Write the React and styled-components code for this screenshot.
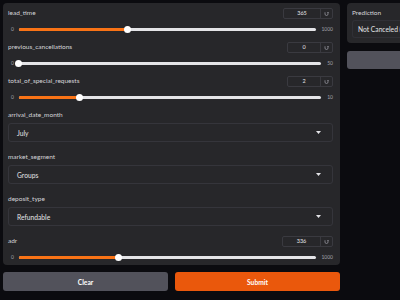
import React from "react";
import styled, { createGlobalStyle } from "styled-components";

const Global = createGlobalStyle`
  html, body { margin: 0; padding: 0; background: #0b0b0f; overflow: hidden; }
  body { font-family: Lato, "Open Sans", sans-serif; color: #e4e4e7; }
  * { box-sizing: border-box; }
`;

const Page = styled.div`
  display: flex;
  gap: 7px;
  padding: 3px 0 0 3px;
  width: 520px;
  height: 300px;
`;

const LeftCol = styled.div`
  width: 337px;
  display: flex;
  flex-direction: column;
  gap: 7px;
`;

const RightCol = styled.div`
  width: 120px;
  display: flex;
  flex-direction: column;
  gap: 8px;
`;

const Panel = styled.div`
  background: #27272a;
  border-radius: 4px;
  padding: 4px 7px 3px 5px;
  display: flex;
  flex-direction: column;
`;

const SliderBlock = styled.div`
  height: ${(p) => (p.last ? 27 : 34)}px;
  display: flex;
  flex-direction: column;
`;

const Header = styled.div`
  height: 12px;
  display: flex;
  align-items: center;
  justify-content: space-between;
`;

const Label = styled.span`
  font-size: 6.5px;
  color: #d4d4d8;
  line-height: 12px;
  white-space: nowrap;
`;

const NumberBox = styled.div`
  width: ${(p) => p.$w}px;
  height: 11px;
  border: 1px solid #3a3a40;
  border-radius: 2px;
  display: flex;
  align-items: stretch;
  background: #27272a;
`;

const NumberValue = styled.span`
  flex: 1;
  font-size: 5.5px;
  color: #e4e4e7;
  display: flex;
  align-items: center;
  justify-content: center;
  border-right: 1px solid #3a3a40;
`;

const ResetCell = styled.span`
  width: 11px;
  display: flex;
  align-items: center;
  justify-content: center;
  color: #a1a1aa;
`;

const TrackRow = styled.div`
  margin-top: 5px;
  height: 10px;
  display: flex;
  align-items: center;
  gap: 5px;
  padding-left: 3px;
`;

const MinMax = styled.span`
  font-size: 5px;
  color: #a1a1aa;
  line-height: 10px;
  min-width: ${(p) => p.$min || 0}px;
  text-align: ${(p) => p.$align || "left"};
`;

const Track = styled.div`
  position: relative;
  flex: 1;
  height: 3px;
  border-radius: 2px;
  background: #e4e4e7;
`;

const Fill = styled.div`
  height: 100%;
  border-radius: 2px;
  background: #f97316;
`;

const Thumb = styled.div`
  position: absolute;
  top: 50%;
  width: 7px;
  height: 7px;
  margin: -3.5px 0 0 -3.5px;
  border-radius: 50%;
  background: #ffffff;
`;

const DropBlock = styled.div`
  height: 42px;
  display: flex;
  flex-direction: column;
`;

const Select = styled.div`
  margin-top: 2px;
  height: 19px;
  border: 1px solid #35353b;
  border-radius: 3px;
  display: flex;
  align-items: center;
  justify-content: space-between;
  padding: 0 11px 0 8px;
  font-size: 6.7px;
  color: #e4e4e7;
`;

const ButtonRow = styled.div`
  display: flex;
  gap: 7px;
`;

const Button = styled.button`
  flex: 1;
  height: 19px;
  border: none;
  border-radius: 3px;
  background: ${(p) => (p.$primary ? "#ea580c" : "#52525b")};
  color: #ffffff;
  font-family: Lato, "Open Sans", sans-serif;
  font-weight: 700;
  font-size: 6.7px;
  padding: 0;
`;

const PredPanel = styled.div`
  background: #27272a;
  border-radius: 4px;
  padding: 4px 0 5px 5px;
  display: flex;
  flex-direction: column;
  gap: 1px;
`;

const OutBox = styled.div`
  height: 18px;
  border: 1px solid #303036;
  border-right: none;
  border-radius: 3px 0 0 3px;
  display: flex;
  align-items: center;
  padding-left: 5px;
  font-size: 6.7px;
  color: #e4e4e7;
  white-space: nowrap;
  overflow: hidden;
`;

const FlagButton = styled.div`
  height: 18px;
  border-radius: 3px 0 0 3px;
  background: #52525b;
`;

const ResetIcon = () => (
  <svg width="5" height="5" viewBox="0 0 10 10" fill="none" stroke="currentColor" strokeWidth="1.4">
    <path d="M2 2.5 V6 A3 3 0 0 0 8 6 V3" />
    <path d="M6.5 4 L8 2.5 L9.5 4" />
  </svg>
);

const Arrow = () => (
  <svg width="5" height="3" viewBox="0 0 5 3">
    <path d="M0 0 H5 L2.5 3 Z" fill="#e4e4e7" />
  </svg>
);

function SliderField({ label, value, max, boxW, last }) {
  const pct = (value / max) * 100;
  return (
    <SliderBlock last={last}>
      <Header>
        <Label>{label}</Label>
        <NumberBox $w={boxW}>
          <NumberValue>{value}</NumberValue>
          <ResetCell>
            <ResetIcon />
          </ResetCell>
        </NumberBox>
      </Header>
      <TrackRow>
        <MinMax>0</MinMax>
        <Track>
          <Fill style={{ width: `${pct}%` }} />
          <Thumb style={{ left: `${pct}%` }} />
        </Track>
        <MinMax $min={max >= 1000 ? 11 : 7} $align="right">
          {max}
        </MinMax>
      </TrackRow>
    </SliderBlock>
  );
}

function DropField({ label, value }) {
  return (
    <DropBlock>
      <Header>
        <Label>{label}</Label>
      </Header>
      <Select>
        <span>{value}</span>
        <Arrow />
      </Select>
    </DropBlock>
  );
}

export default function App() {
  return (
    <>
      <Global />
      <Page>
        <LeftCol>
          <Panel>
            <SliderField label="lead_time" value={365} max={1000} boxW={50} />
            <SliderField label="previous_cancellations" value={0} max={50} boxW={46} />
            <SliderField label="total_of_special_requests" value={2} max={10} boxW={46} />
            <DropField label="arrival_date_month" value="July" />
            <DropField label="market_segment" value="Groups" />
            <DropField label="deposit_type" value="Refundable" />
            <SliderField label="adr" value={336} max={1000} boxW={51} last />
          </Panel>
          <ButtonRow>
            <Button>Clear</Button>
            <Button $primary>Submit</Button>
          </ButtonRow>
        </LeftCol>
        <RightCol>
          <PredPanel>
            <Header>
              <Label>Prediction</Label>
            </Header>
            <OutBox>Not Canceled (0.71)</OutBox>
          </PredPanel>
          <FlagButton />
        </RightCol>
      </Page>
    </>
  );
}
